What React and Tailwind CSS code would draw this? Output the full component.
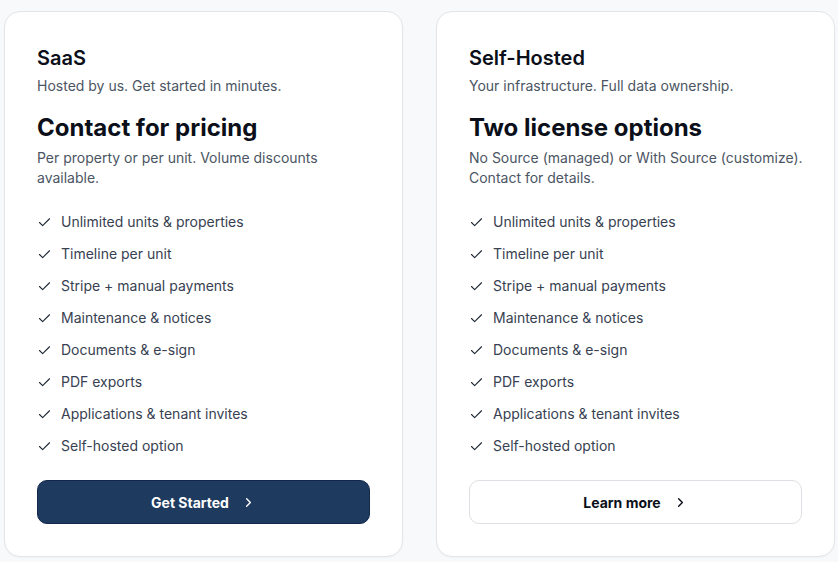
import React from "react";
import { Check, ChevronRight } from "lucide-react";

const features = [
  "Unlimited units & properties",
  "Timeline per unit",
  "Stripe + manual payments",
  "Maintenance & notices",
  "Documents & e-sign",
  "PDF exports",
  "Applications & tenant invites",
  "Self-hosted option",
];

function PlanCard({ name, tagline, price, note, cta, primary }) {
  return (
    <div className="flex flex-col rounded-[16px] border border-[#e3e5e8] bg-white p-8 shadow-[0_1px_2px_rgba(0,0,0,0.03)]">
      <h3 className="text-[20px] font-semibold leading-7 text-[#0b0f19]">{name}</h3>
      <p className="mt-1 text-[14px] leading-5 text-[#4b5563]">{tagline}</p>
      <p className="mt-4 text-[24px] font-bold leading-8 text-[#0b0f19]">{price}</p>
      <p className="mr-[-10px] mt-1 text-[14px] leading-5 text-[#4b5563]">{note}</p>
      <ul className="mt-6 flex flex-col gap-3">
        {features.map((f) => (
          <li key={f} className="flex items-center gap-[9px] text-[14px] leading-5 text-[#374151]">
            <Check className="h-[15px] w-[15px] shrink-0 text-[#1f2937]" strokeWidth={1.75} />
            <span>{f}</span>
          </li>
        ))}
      </ul>
      <button
        className={
          primary
            ? "mt-6 flex h-[44px] items-center justify-center gap-[12px] rounded-[10px] border border-[#13284a] bg-[#1e3a5f] text-[14px] font-bold text-white"
            : "mt-6 flex h-[44px] items-center justify-center gap-[12px] rounded-[10px] border border-[#dcdfe3] bg-white text-[14px] font-bold text-[#0b0f19]"
        }
      >
        <span>{cta}</span>
        <ChevronRight className="h-[15px] w-[15px]" strokeWidth={2.25} />
      </button>
    </div>
  );
}

export default function App() {
  return (
    <div
      className="min-h-[562px] w-[838px] bg-[#f8f9fa] pl-[4px] pr-[3px] pt-[11px]"
      style={{ fontFamily: "Inter, 'Noto Sans', sans-serif" }}
    >
      <div className="grid grid-cols-2 gap-[33px]">
        <PlanCard
          name="SaaS"
          tagline="Hosted by us. Get started in minutes."
          price="Contact for pricing"
          note="Per property or per unit. Volume discounts available."
          cta="Get Started"
          primary
        />
        <PlanCard
          name="Self-Hosted"
          tagline="Your infrastructure. Full data ownership."
          price="Two license options"
          note="No Source (managed) or With Source (customize). Contact for details."
          cta="Learn more"
        />
      </div>
    </div>
  );
}
